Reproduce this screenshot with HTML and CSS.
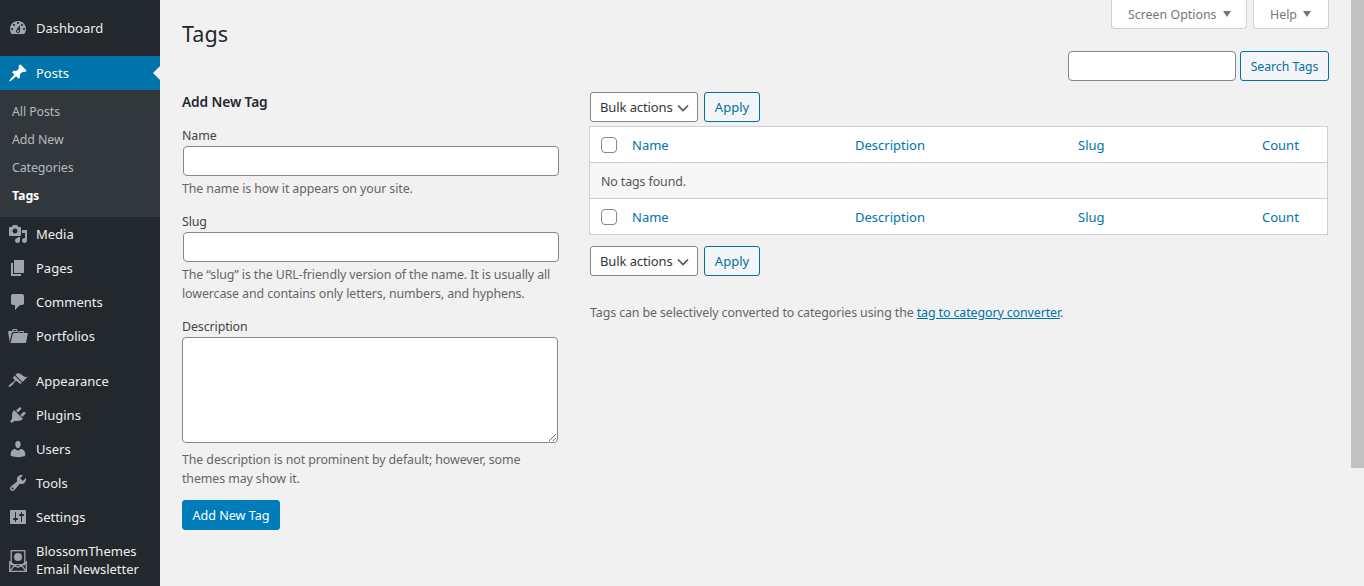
FILE: index.html
```html
<!DOCTYPE html>
<html lang="en">
<head>
<meta charset="utf-8">
<title>Tags</title>
<link rel="stylesheet" href="styles.css">
</head>
<body>
<div class="app">
  <nav class="side">
    <a class="item first"><svg class="ic" viewBox="0 0 20 20"><path fill-rule="evenodd" d="M3.76 16h12.48c1.1-1.37 1.76-3.11 1.76-5 0-4.42-3.58-8-8-8s-8 3.58-8 8c0 1.89.66 3.63 1.76 5zM10 4c.55 0 1 .45 1 1s-.45 1-1 1-1-.45-1-1 .45-1 1-1zM6 6c.55 0 1 .45 1 1s-.45 1-1 1-1-.45-1-1 .45-1 1-1zm8 0c.55 0 1 .45 1 1s-.45 1-1 1-1-.45-1-1 .45-1 1-1zm-5.37 5.55L12 7v6c0 1.1-.9 2-2 2s-2-.9-2-2c0-.57.24-1.08.63-1.45zM4 10c.55 0 1 .45 1 1s-.45 1-1 1-1-.45-1-1 .45-1 1-1zm12 0c.55 0 1 .45 1 1s-.45 1-1 1-1-.45-1-1 .45-1 1-1zm-5 3c0-.55-.45-1-1-1s-1 .45-1 1 .45 1 1 1 1-.45 1-1z"/></svg>Dashboard</a>
    <a class="item current"><svg class="ic" viewBox="0 0 20 20"><path d="M10.44 3.02l1.82-1.82 6.36 6.35-1.83 1.82c-1.05-.68-2.48-.57-3.41.36l-.75.75c-.92.93-1.04 2.35-.35 3.41l-1.83 1.82-2.41-2.41-2.8 2.79c-.42.42-3.38 2.71-3.8 2.29s1.86-3.39 2.28-3.81l2.79-2.79L4.1 9.36l1.83-1.82c1.05.69 2.48.57 3.4-.36l.75-.75c.93-.92 1.05-2.35.36-3.41z"/></svg>Posts</a>
    <div class="sub">
      <a>All Posts</a>
      <a>Add New</a>
      <a>Categories</a>
      <a class="on">Tags</a>
    </div>
    <a class="item"><svg class="ic" viewBox="0 0 20 20"><path d="M13 11V4c0-.55-.45-1-1-1h-1.67L9 1H5L3.67 3H2c-.55 0-1 .45-1 1v7c0 .55.45 1 1 1h10c.55 0 1-.45 1-1zM7 4.5c1.38 0 2.5 1.12 2.5 2.5S8.38 9.5 7 9.5 4.5 8.38 4.5 7 5.62 4.5 7 4.5zM14 6h5v10.5c0 1.38-1.12 2.5-2.5 2.5S14 17.88 14 16.5s1.12-2.5 2.5-2.5c.17 0 .34.02.5.05V9h-3V6zm-4 8.05V13h2v3.5c0 1.38-1.12 2.5-2.5 2.5S7 17.88 7 16.5 8.12 14 9.5 14c.17 0 .34.02.5.05z" fill-rule="evenodd"/></svg>Media</a>
    <a class="item"><svg class="ic" viewBox="0 0 20 20"><path d="M6 15V2h10v13H6zm-1 1h8v2H3V5h2v11z"/></svg>Pages</a>
    <a class="item"><svg class="ic" viewBox="0 0 20 20"><path d="M5 2h9c1.1 0 2 .9 2 2v7c0 1.1-.9 2-2 2h-2l-5 5v-5H5c-1.1 0-2-.9-2-2V4c0-1.1.9-2 2-2z"/></svg>Comments</a>
    <a class="item gap"><svg class="ic" viewBox="0 0 20 20"><path d="M4 5H.78c-.37 0-.74.32-.69.84l1.56 9.99S3.5 8.47 3.86 6.7c.11-.53.61-.7.98-.7H10s-.7-2.08-.77-2.31C9.11 3.25 8.89 3 8.45 3H5.14c-.36 0-.7.23-.8.64C4.24 4.04 4 5 4 5zm4.88 0h-4s.42-1 .87-1h2.13c.48 0 1 1 1 1zM2.67 16.25c-.31.47-.76.75-1.26.75h15.73c.54 0 .92-.31 1.03-.83.44-2.19 1.68-8.44 1.68-8.44.07-.5-.3-.73-.62-.73H16V5.53c0-.16-.26-.53-.66-.53h-3.76c-.52 0-.87.58-.87.58L10 7H5.59c-.32 0-.63.19-.69.5 0 0-1.59 6.7-1.72 7.33-.07.37-.22.99-.51 1.42zM15.38 7H11s.58-1 1.13-1h2.29c.71 0 .96 1 .96 1z"/></svg>Portfolios</a>
    <a class="item"><svg class="ic" viewBox="0 0 20 20"><path d="M14.48 11.06L7.41 3.99l1.5-1.5c.5-.56 2.3-.47 3.51.32 1.21.8 1.43 1.28 2.91 2.1 1.18.64 2.45 1.26 4.45.85zM13.77 11.77L6.700 4.700 5.380 6.020c-.39.39-.39 1.02 0 1.410l1.060 1.060c.39.39.39 1.03 0 1.420-.6.6-1.430 1.110-2.210 1.690-.35.26-.7.53-1.010.84C1.430 13.230.250 15.250.770 15.770c.52.52 2.540-.66 4.090-2.220.31-.31.58-.66.84-1.010.58-.78 1.090-1.610 1.690-2.210.39-.39 1.030-.39 1.420 0L12.450 13.090z"/></svg>Appearance</a>
    <a class="item"><svg class="ic" viewBox="0 0 20 20"><path d="M13.11 4.36L9.87 7.6 8 5.73l3.24-3.24c.35-.34 1.05-.2 1.56.32.52.51.66 1.21.31 1.55zm-8 1.77l.91-1.12 9.01 9.01-1.19.84c-.71.71-2.63 1.16-3.82 1.16H6.14L4.9 17.26c-.59.59-1.54.59-2.12 0-.59-.58-.59-1.53 0-2.12l1.24-1.24v-3.88c0-1.13.4-3.19 1.09-3.89zm7.26 3.97l3.24-3.24c.34-.35 1.04-.21 1.55.31.52.51.66 1.21.31 1.55l-3.24 3.25z"/></svg>Plugins</a>
    <a class="item"><svg class="ic" viewBox="0 0 20 20"><path d="M10 9.25c-2.27 0-2.73-3.44-2.73-3.44C7 4.02 7.82 2 9.97 2c2.16 0 2.98 2.02 2.71 3.81 0 0-.41 3.44-2.68 3.44zm0 2.57L12.72 10c2.39 0 4.52 2.33 4.52 4.53v2.49s-3.65 1.13-7.24 1.13c-3.65 0-7.24-1.13-7.24-1.13v-2.49c0-2.25 1.94-4.48 4.47-4.48z"/></svg>Users</a>
    <a class="item"><svg class="ic" viewBox="0 0 20 20"><path fill-rule="evenodd" d="M16.68 9.77c-1.34 1.34-3.3 1.67-4.95.99l-5.41 6.52c-.99.99-2.59.99-3.58 0s-.99-2.59 0-3.57l6.52-5.42c-.68-1.65-.35-3.61.99-4.95 1.28-1.28 3.12-1.62 4.72-1.06l-2.89 2.89 2.82 2.82 2.86-2.87c.53 1.58.18 3.39-1.08 4.65zM3.81 16.21c.4.39 1.04.39 1.43 0 .4-.4.4-1.04 0-1.44-.39-.39-1.03-.39-1.43 0-.39.4-.39 1.04 0 1.44z"/></svg>Tools</a>
    <a class="item"><svg class="ic" viewBox="0 0 20 20"><path fill-rule="evenodd" d="M18 16V4c0-.55-.45-1-1-1H3c-.55 0-1 .45-1 1v12c0 .55.45 1 1 1h14c.55 0 1-.45 1-1zM8 11h1c.55 0 1 .45 1 1s-.45 1-1 1H8v1.5c0 .28-.22.5-.5.5s-.5-.22-.5-.5V13H6c-.55 0-1-.45-1-1s.45-1 1-1h1V5.5c0-.28.22-.5.5-.5s.5.22.5.5V11zm5-2h-1c-.55 0-1-.45-1-1s.45-1 1-1h1V5.5c0-.28.22-.5.5-.5s.5.22.5.5V7h1c.55 0 1 .45 1 1s-.45 1-1 1h-1v5.500c0 .28-.22.5-.5.5s-.5-.22-.5-.5V9z"/></svg>Settings</a>
    <a class="item two"><svg class="logo" viewBox="0 0 18 22"><rect x="2.200" y=".7" width="13.600" height="14"/><circle class="dot" cx="9" cy="7" r="4"/><path d="M.7 12v9.300h16.600V12L9 17.500zM.7 21.300l5.500-6.700M17.300 21.300l-5.500-6.700"/></svg><span>BlossomThemes<br>Email Newsletter</span></a>
  </nav>
  <main class="main">
    <div class="tabs">
      <button class="tab tab-screen">Screen Options<i class="tri"></i></button>
      <button class="tab tab-help">Help<i class="tri"></i></button>
    </div>
    <h1>Tags</h1>
    <div class="search">
      <input class="field srch" type="text">
      <button class="btn search-btn">Search Tags</button>
    </div>
    <div class="cols">
      <section class="left">
        <h2>Add New Tag</h2>
        <label>Name</label>
        <input class="field wide" type="text">
        <p class="hint">The name is how it appears on your site.</p>
        <label class="next">Slug</label>
        <input class="field wide" type="text">
        <p class="hint">The “slug” is the URL-friendly version of the name. It is usually all lowercase and contains only letters, numbers, and hyphens.</p>
        <label class="next">Description</label>
        <textarea class="field area"></textarea>
        <p class="hint after">The description is not prominent by default; however, some themes may show it.</p>
        <button class="primary">Add New Tag</button>
      </section>
      <section class="right">
        <div class="bar">
          <span class="select">Bulk actions<svg class="chev" viewBox="0 0 16 16"><path d="M3 5.500l5 5 5-5"/></svg></span>
          <button class="btn">Apply</button>
        </div>
        <div class="table">
          <div class="row">
            <span class="c-cb"><i class="cb"></i></span><a>Name</a><a>Description</a><a>Slug</a><a>Count</a>
          </div>
          <div class="row empty">No tags found.</div>
          <div class="row">
            <span class="c-cb"><i class="cb"></i></span><a>Name</a><a>Description</a><a>Slug</a><a>Count</a>
          </div>
        </div>
        <div class="bar lower">
          <span class="select">Bulk actions<svg class="chev" viewBox="0 0 16 16"><path d="M3 5.500l5 5 5-5"/></svg></span>
          <button class="btn">Apply</button>
        </div>
        <p class="note">Tags can be selectively converted to categories using the <a>tag to category converter</a>.</p>
      </section>
    </div>
  </main>
  <div class="scroll"><div class="thumb"></div></div>
</div>
</body>
</html>
```

FILE: styles.css
```css
* { box-sizing: border-box; }
html, body { margin: 0; height: 100%; overflow: hidden; }
body { background: #f1f1f1; color: #444; font: 12.4px/19px "Noto Sans", sans-serif; letter-spacing: -0.1px; }
.app { display: flex; height: 586px; }

.side { width: 160px; flex: none; background: #23282d; color: #eee; display: flex; flex-direction: column; padding-top: 11px; }
.item { display: flex; align-items: center; height: 34px; padding-left: 36px; position: relative; color: #eee; font-size: 13px; letter-spacing: 0; }
.item .ic { position: absolute; left: 8px; top: 7px; width: 20px; height: 20px; fill: #a0a5aa; }
.first { margin-bottom: 11px; }
.current { background: #0073aa; color: #fff; }
.current .ic { fill: #fff; }
.current::after { content: ""; position: absolute; right: 0; top: 10px; border: 7px solid transparent; border-right-color: #f1f1f1; border-left-width: 0; }
.sub { background: #32373c; height: 127px; padding: 8px 0 0 12px; display: flex; flex-direction: column; }
.sub a { height: 28px; line-height: 28px; color: #b4b9be; }
.sub .on { color: #fff; font-weight: 700; }
.gap { margin-bottom: 11px; }
.two { height: 36px; margin-top: 8px; line-height: 18px; }
.logo { position: absolute; left: 9px; top: 8px; width: 18px; height: 22px; fill: none; stroke: #a0a5aa; stroke-width: 1.3; }
.logo .dot { fill: #a0a5aa; stroke: none; }

.main { flex: 1; min-width: 0; padding: 0 22px; }
.tabs { display: flex; justify-content: flex-end; gap: 6px; height: 0; }
.tab { height: 29px; background: #fff; border: 1px solid #ccd0d4; border-top: 0; border-radius: 0 0 4px 4px; color: #72777c; font: inherit; padding: 0 0 0 16px; display: flex; align-items: center; }
.tab-screen { width: 136px; }
.tab-help { width: 76px; }
.tri { width: 0; height: 0; border: 4.500px solid transparent; border-top: 6px solid #72777c; border-bottom: 0; margin-left: 6px; }
h1 { margin: 0; padding-top: 19px; font-size: 21.6px; font-weight: 400; line-height: 30px; color: #23282d; height: 51px; letter-spacing: 0; }

.search { display: flex; justify-content: flex-end; gap: 4px; height: 30px; }
.field { background: #fff; border: 1px solid #7e8993; border-radius: 4px; display: block; margin: 0; padding: 0; font: inherit; }
.srch { width: 168px; height: 30px; }
.btn { height: 30px; background: #f3f5f6; border: 1px solid #0071a1; border-radius: 3px; color: #0071a1; font: inherit; padding: 0; }
.search-btn { width: 89px; font-size: 12.2px; }

.cols { display: flex; margin-top: 11px; }
.left { width: 376px; flex: none; margin-right: 32px; }
h2 { margin: 0 0 15px; font-size: 13.7px; line-height: 20px; font-weight: 600; color: #23282d; letter-spacing: -0.1px; }
label { display: block; line-height: 18px; color: #444; font-size: 12.4px; }
.left .wide { width: 376px; height: 30px; margin: 1px 0 3px 1px; }
.hint { margin: 0; color: #666; line-height: 19px; }
.next { margin-top: 15px; }
.area { width: 376px; height: 106px; margin-top: 1px; }
.after { margin-top: 7px; }
.primary { display: block; margin-top: 12px; width: 98px; height: 30px; border: 1px solid #007cba; border-radius: 3px; background: #007cba; color: #fff; font: inherit; font-size: 12.6px; padding: 0; }

.right { flex: 1; min-width: 0; }
.bar { display: flex; gap: 6px; height: 30px; }
.bar .btn { width: 56px; font-size: 13px; }
.select { width: 108px; height: 30px; display: flex; align-items: center; background: #fff; border: 1px solid #7e8993; border-radius: 3px; padding-left: 9px; color: #32373c; position: relative; font-size: 13px; }
.chev { position: absolute; right: 6px; top: 7px; width: 16px; height: 16px; fill: none; stroke: #555; stroke-width: 1.7; }
.table { margin: 4px 0 0 -1px; width: 739px; background: #fff; border: 1px solid #ccd0d4; }
.row { height: 36px; padding-top: 1px; display: grid; grid-template-columns: 42px 223px 223px 184px 1fr; align-items: center; color: #0073aa; border-top: 1px solid #ccd0d4; font-size: 13px; letter-spacing: 0; }
.row:first-child { border-top: 0; height: 35px; }
.empty { display: block; line-height: 35px; padding-top: 1px; background: #f7f7f7; padding-left: 11px; color: #555; font-size: 12.4px; letter-spacing: -0.1px; }
.c-cb { padding-left: 11px; display: flex; }
.cb { width: 16px; height: 16px; background: #fff; border: 1px solid #7e8993; border-radius: 4px; }
.lower { margin-top: 11px; }
.note { margin: 27px 0 0; color: #666; }
.note a { color: #0073aa; text-decoration: underline; }

.scroll { width: 13px; flex: none; background: #f1f1f1; }
.thumb { height: 468px; background: #c1c1c1; }
```
